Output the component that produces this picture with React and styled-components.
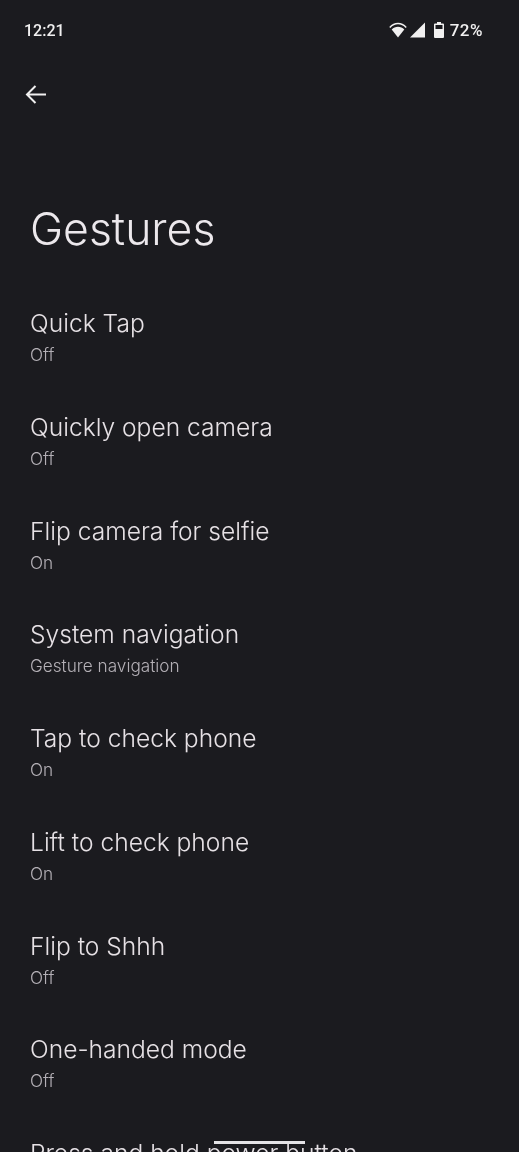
import React from 'react';
import styled, { createGlobalStyle } from 'styled-components';

const Global = createGlobalStyle`
  html, body { margin: 0; padding: 0; background: #1b1b1f; height: 100%; overflow: hidden; }
  #root { height: 1152px; overflow: hidden; }
`;
const Page = styled.div`
  width: 519px; height: 1152px; background: #1b1b1f; color: #e6e1e5; position: relative; overflow: hidden;
  font-family: Inter, Roboto, sans-serif; display: flex; flex-direction: column;
`;
const StatusBar = styled.div`
  flex: none; height: 60px; padding: 0 36px 0 24px; display: flex; align-items: center; justify-content: space-between;
  font-size: 16px; font-weight: 500; color: #f1f0f0; box-sizing: border-box; font-family: Roboto, sans-serif;
  will-change: transform;
`;
const StatusRight = styled.div`display: flex; align-items: center;`;
const StatusIcon = styled.svg`flex: none; display: block; margin-left: ${p => p.$gap}px;`;
const Percent = styled.span`margin-left: 6px; font-size: 17px; letter-spacing: 0.5px;`;
const BackRow = styled.div`flex: none; height: 70px; padding-left: 24px; display: flex; align-items: flex-start; svg { margin-top: 22px; }`;
const Title = styled.h1`
  flex: none; margin: 0; padding: 0 0 0 30px; font-size: 44.5px; font-weight: 350; line-height: 60px; height: 60px; margin-top: 69px; color: #ece8ec;
  will-change: transform;
`;
const List = styled.div`flex: none; display: flex; flex-direction: column; padding: 0 30px; margin-top: 48px; will-change: transform;`;
const Item = styled.div`height: 103.75px; flex: none;`;
const ItemTitle = styled.div`font-size: 24.6px; font-weight: 350; line-height: 32px; color: #e6e1e5; white-space: nowrap;`;
const ItemSub = styled.div`font-size: 17.2px; font-weight: 350; line-height: 24px; color: #b4b0b6; margin-top: 4px;`;
const NavPill = styled.div`position: absolute; left: 214px; top: 1141px; width: 91px; height: 3px; background: #e4e3e6; z-index: 2;`;

const items = [
  ['Quick Tap', 'Off'], ['Quickly open camera', 'Off'], ['Flip camera for selfie', 'On'],
  ['System navigation', 'Gesture navigation'], ['Tap to check phone', 'On'], ['Lift to check phone', 'On'],
  ['Flip to Shhh', 'Off'], ['One-handed mode', 'Off'], ['Press and hold power button', ''],
];

export default function App() {
  return (
    <Page>
      <Global />
      <StatusBar>
        <span>12:21</span>
        <StatusRight>
          <StatusIcon $gap={0} width="18" height="16" viewBox="0 0 18 16"><path d="M9 15.500 2.700 7.400C4.400 5.800 6.600 4.800 9 4.800s4.600 1 6.300 2.600z" fill="#f1f0f0"/><path d="M.8 5.400C3 3.100 5.900 1.600 9 1.600s6 1.500 8.200 3.800" fill="none" stroke="#f1f0f0" strokeWidth="1.500"/></StatusIcon>
          <StatusIcon $gap={3} width="15" height="16" viewBox="0 0 15 16"><path d="M15 .5v15H0z" fill="#f1f0f0"/></StatusIcon>
          <StatusIcon $gap={9} width="10" height="16" viewBox="0 0 10 16"><path fillRule="evenodd" d="M3 0h4v1.500h2a1 1 0 0 1 1 1V15a1 1 0 0 1-1 1H1a1 1 0 0 1-1-1V2.500a1 1 0 0 1 1-1h2zM1.500 3v4h7V3z" fill="#f1f0f0"/></StatusIcon>
          <Percent>72%</Percent>
        </StatusRight>
      </StatusBar>
      <BackRow>
        <svg width="24" height="24" viewBox="0 0 24 24" fill="none" stroke="#f1f0f0" strokeWidth="2"><path d="M22 12.500H3M11.500 4 3 12.500l8.500 8.500"/></svg>
      </BackRow>
      <Title>Gestures</Title>
      <List>
        {items.map(([t, s]) => (
          <Item key={t}>
            <ItemTitle>{t}</ItemTitle>
            {s && <ItemSub>{s}</ItemSub>}
          </Item>
        ))}
      </List>
      <NavPill />
    </Page>
  );
}
